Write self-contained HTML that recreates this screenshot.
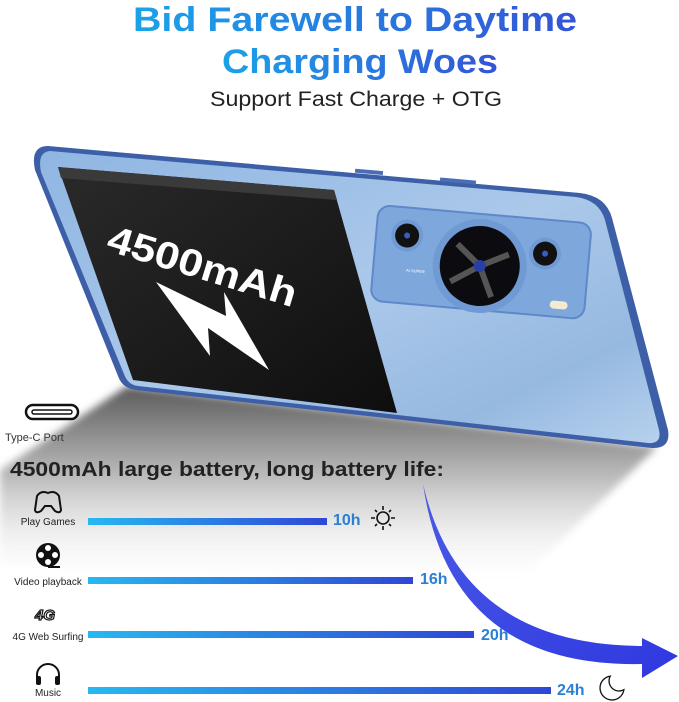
<!DOCTYPE html>
<html><head><meta charset="utf-8"><style>
html,body{margin:0;padding:0;background:#fff;width:679px;height:702px;overflow:hidden}
svg{display:block}
text{font-family:"Liberation Sans",sans-serif}
</style></head><body>
<svg width="679" height="702" viewBox="0 0 679 702" xmlns="http://www.w3.org/2000/svg">
<defs>
<linearGradient id="tg" x1="0" x2="1" y1="0" y2="0"><stop offset="0" stop-color="#1aa3e8"/><stop offset="1" stop-color="#3454d6"/></linearGradient>
<linearGradient id="bar" x1="0" x2="1"><stop offset="0" stop-color="#27b8f0"/><stop offset="1" stop-color="#2f46d6"/></linearGradient>
<linearGradient id="sh" x1="0" y1="0" x2="0" y2="1"><stop offset="0" stop-color="#5a5a5a"/><stop offset="0.45" stop-color="#bdbdbd"/><stop offset="1" stop-color="#fff" stop-opacity="0"/></linearGradient>
<linearGradient id="body" x1="0" y1="0" x2="1" y2="1"><stop offset="0" stop-color="#8fb6e2"/><stop offset="0.5" stop-color="#abc8ea"/><stop offset="0.8" stop-color="#96b9e0"/><stop offset="1" stop-color="#b7d1ee"/></linearGradient>
<linearGradient id="bat" x1="0" y1="0" x2="1" y2="1"><stop offset="0" stop-color="#2a2a2a"/><stop offset="1" stop-color="#0e0e0e"/></linearGradient>
<linearGradient id="arr" x1="0" y1="0" x2="1" y2="1"><stop offset="0" stop-color="#4a5ae6"/><stop offset="1" stop-color="#2f38e0"/></linearGradient>
<filter id="bl"><feGaussianBlur stdDeviation="4"/></filter>
</defs>

<text x="355" y="31" font-size="34" font-weight="bold" fill="url(#tg)" text-anchor="middle" textLength="444" lengthAdjust="spacingAndGlyphs">Bid Farewell to Daytime</text>
<text x="360" y="73" font-size="34" font-weight="bold" fill="url(#tg)" text-anchor="middle" textLength="276" lengthAdjust="spacingAndGlyphs">Charging Woes</text>
<text x="356" y="106" font-size="21" fill="#222" text-anchor="middle" textLength="292" lengthAdjust="spacingAndGlyphs">Support Fast Charge + OTG</text>

<polygon points="127,386 657,447 510,590 0,565 0,470" fill="url(#sh)" filter="url(#bl)"/>

<path d="M48,146 L580,193 Q606,196 612,218 L668,430 Q671,449 652,448 L136,390 Q122,388 118,376 L35,170 Q30,146 48,146 Z" fill="#3d5fa8"/>
<path d="M50,151 L576,197 Q599,200 605,220 L659,430 Q662,444 648,443 L138,386 Q128,385 124,374 L41,172 Q37,152 50,151 Z" fill="url(#body)"/>
<rect x="355" y="170" width="28" height="4" fill="#4a6db5" transform="rotate(5 370 172)"/>
<rect x="440" y="179" width="36" height="4" fill="#4a6db5" transform="rotate(5 458 181)"/>
<path d="M58,167 L334,190 L397,413 L133,380 Z" fill="url(#bat)"/>
<path d="M58,167 L334,190 L337,200 L61,178 Z" fill="#3a3a3a"/>
<text x="0" y="0" font-size="38" font-weight="bold" fill="#fff" transform="translate(105,250) rotate(17)" textLength="196" lengthAdjust="spacingAndGlyphs">4500mAh</text>
<polygon points="156,282 226,316 224,292 269,370 208,328 210,356" fill="#fff"/>
<g transform="rotate(5 480 263)">
<rect x="374" y="214" width="214" height="96" rx="12" fill="#7ea8dc" stroke="#5e88c8" stroke-width="2"/>
<circle cx="480" cy="266" r="47" fill="#6f9ad4"/>
<circle cx="480" cy="266" r="40" fill="#0c0c10"/>
<path d="M480,266 L456,246 M480,266 L508,252 M480,266 L494,296 M480,266 L452,284" stroke="#555" stroke-width="6"/>
<circle cx="480" cy="266" r="6" fill="#2a3ea8"/>
<circle cx="405" cy="242" r="16" fill="#6f9ad4"/><circle cx="405" cy="242" r="12" fill="#111"/><circle cx="405" cy="242" r="3" fill="#3b5cc0"/>
<circle cx="544" cy="248" r="16" fill="#6f9ad4"/><circle cx="544" cy="248" r="12" fill="#111"/><circle cx="544" cy="248" r="3" fill="#3b5cc0"/>
<rect x="553" y="294" width="18" height="8" rx="4" fill="#f3ead0"/>
<text x="407" y="278" font-size="4" fill="#fff">AI SUPER</text>
</g>

<path d="M423,484 Q460,645 642,646 L642,638 L678,656 L642,678 L642,664 Q450,668 423,484 Z" fill="url(#arr)"/>

<rect x="26" y="405" width="52" height="14" rx="7" fill="#fff" stroke="#111" stroke-width="2.5"/>
<rect x="32" y="410" width="40" height="4" rx="2" fill="none" stroke="#111" stroke-width="1.5"/>
<text x="5" y="441" font-size="11" fill="#333">Type-C Port</text>

<text x="10" y="476" font-size="20" font-weight="bold" fill="#222" textLength="434" lengthAdjust="spacingAndGlyphs">4500mAh large battery, long battery life:</text>

<path d="M37,496 Q41,490 48,493 Q55,490 59,496 L61,510 Q60,514 55,511 L51,506 L45,506 L41,511 Q36,514 35,510 Z" fill="none" stroke="#111" stroke-width="2"/>
<text x="48" y="525" font-size="10" fill="#222" text-anchor="middle">Play Games</text>
<rect x="88" y="518" width="239" height="7" fill="url(#bar)"/>
<text x="333" y="525" font-size="16" font-weight="bold" fill="#2a7fd4">10h</text>
<g stroke="#111" stroke-width="1.6" fill="none"><circle cx="383" cy="518" r="6"/><path d="M383,506v4M383,526v4M371,518h4M391,518h4M375,510l2,2M389,524l2,2M391,510l-2,2M375,526l2,-2"/></g>

<circle cx="48" cy="555" r="12" fill="#111"/><g fill="#fff"><circle cx="48" cy="548" r="3"/><circle cx="48" cy="562" r="3"/><circle cx="41" cy="555" r="3"/><circle cx="55" cy="555" r="3"/></g><path d="M48,567 L60,567" stroke="#111" stroke-width="2"/>
<text x="48" y="585" font-size="10" fill="#222" text-anchor="middle">Video playback</text>
<rect x="88" y="577" width="325" height="7" fill="url(#bar)"/>
<text x="420" y="584" font-size="16" font-weight="bold" fill="#2a7fd4">16h</text>

<text x="35" y="620" font-size="15" font-weight="bold" font-style="italic" fill="#fff" stroke="#111" stroke-width="1.2">4G</text>
<text x="48" y="640" font-size="10" fill="#222" text-anchor="middle">4G Web Surfing</text>
<rect x="88" y="631" width="386" height="7" fill="url(#bar)"/>
<text x="481" y="640" font-size="16" font-weight="bold" fill="#2a7fd4">20h</text>

<path d="M37,682 V675 A11,11 0 0 1 59,675 V682" fill="none" stroke="#111" stroke-width="2"/>
<rect x="36" y="676" width="5" height="9" rx="2" fill="#111"/><rect x="55" y="676" width="5" height="9" rx="2" fill="#111"/>
<text x="48" y="696" font-size="10" fill="#222" text-anchor="middle">Music</text>
<rect x="88" y="687" width="463" height="7" fill="url(#bar)"/>
<text x="557" y="695" font-size="16" font-weight="bold" fill="#2a7fd4">24h</text>
<path d="M610.3,676.1 A12,12 0 1 0 623.9,689.7 A10,10 0 0 1 610.3,676.1 Z" fill="#fff" stroke="#111" stroke-width="1.3"/>
</svg>
</body></html>
